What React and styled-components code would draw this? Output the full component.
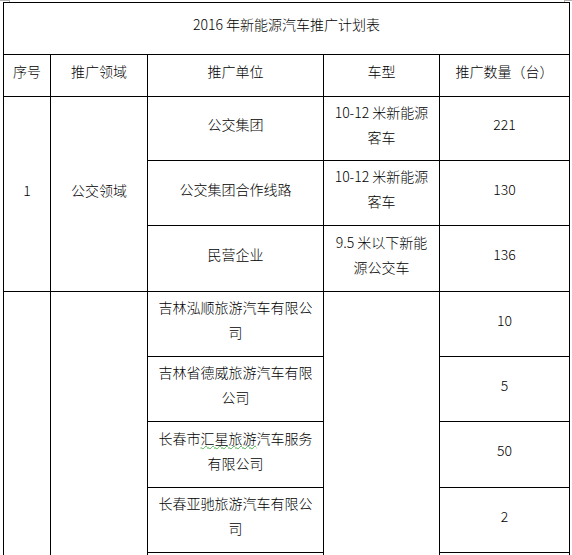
import React from "react";
import styled, { createGlobalStyle } from "styled-components";

const GlobalStyle = createGlobalStyle`
  html, body {
    margin: 0;
    padding: 0;
    overflow: hidden;
    background: #ffffff;
  }
  body {
    font-family: "Noto Sans CJK SC", "Noto Sans", sans-serif;
    color: #000000;
  }
`;

const Page = styled.div`
  position: relative;
  width: 572px;
  height: 555px;
  overflow: hidden;
  padding: 2px 0 0 3px;
  box-sizing: border-box;
`;

const Marker = styled.div`
  position: absolute;
  top: 0;
  ${(p) => (p.$side === "left" ? "left: 0;" : "right: 0;")}
  width: ${(p) => (p.$side === "left" ? "10px" : "8px")};
  height: 2px;
  border-top: 1px solid #b0b0b0;
  ${(p) =>
    p.$side === "left"
      ? "border-right: 1px solid #b0b0b0;"
      : "border-left: 1px solid #b0b0b0;"}
  box-sizing: border-box;
`;

const Table = styled.table`
  border-collapse: collapse;
  table-layout: fixed;
  width: 567px;
  font-size: 14px;
  line-height: 25px;
  font-weight: 300;
`;

const Row = styled.tr`
  height: ${(p) => p.$h}px;
`;

const Cell = styled.td`
  border: 1px solid #000000;
  text-align: center;
  vertical-align: middle;
  padding: 0 7px 8px;
  color: #000000;
  word-break: break-all;
`;

const Squiggle = styled.span`
  text-decoration: underline wavy #4caf50;
  text-decoration-thickness: 1px;
  text-underline-offset: 1px;
`;

const topGroup = [
  { unit: "公交集团", type: "10-12 米新能源客车", qty: "221", h: 64 },
  { unit: "公交集团合作线路", type: "10-12 米新能源客车", qty: "130", h: 65 },
  { unit: "民营企业", type: "9.5 米以下新能源公交车", qty: "136", h: 66 },
];

const tourGroup = [
  { unit: "吉林泓顺旅游汽车有限公司", qty: "10", h: 65 },
  { unit: "吉林省德威旅游汽车有限公司", qty: "5", h: 65 },
  {
    unit: (
      <>
        长春市<Squiggle>汇星旅游</Squiggle>汽车服务有限公司
      </>
    ),
    qty: "50",
    h: 66,
  },
  { unit: "长春亚驰旅游汽车有限公司", qty: "2", h: 65 },
  { unit: "", qty: "", h: 65 },
];

export default function App() {
  return (
    <>
      <GlobalStyle />
      <Page>
        <Marker $side="left" />
        <Marker $side="right" />
        <Table>
          <colgroup>
            <col style={{ width: 47 }} />
            <col style={{ width: 97 }} />
            <col style={{ width: 176 }} />
            <col style={{ width: 116 }} />
            <col style={{ width: 130 }} />
          </colgroup>
          <tbody>
            <Row $h={52}>
              <Cell colSpan={5}>2016 年新能源汽车推广计划表</Cell>
            </Row>
            <Row $h={42}>
              <Cell>序号</Cell>
              <Cell>推广领域</Cell>
              <Cell>推广单位</Cell>
              <Cell>车型</Cell>
              <Cell>推广数量（台）</Cell>
            </Row>
            {topGroup.map((r, i) => (
              <Row $h={r.h} key={"t" + i}>
                {i === 0 && <Cell rowSpan={3}>1</Cell>}
                {i === 0 && <Cell rowSpan={3}>公交领域</Cell>}
                <Cell>{r.unit}</Cell>
                <Cell>{r.type}</Cell>
                <Cell>{r.qty}</Cell>
              </Row>
            ))}
            {tourGroup.map((r, i) => (
              <Row $h={r.h} key={"g" + i}>
                {i === 0 && <Cell rowSpan={5}></Cell>}
                {i === 0 && <Cell rowSpan={5}></Cell>}
                <Cell>{r.unit}</Cell>
                {i === 0 && <Cell rowSpan={5}></Cell>}
                <Cell>{r.qty}</Cell>
              </Row>
            ))}
          </tbody>
        </Table>
      </Page>
    </>
  );
}
